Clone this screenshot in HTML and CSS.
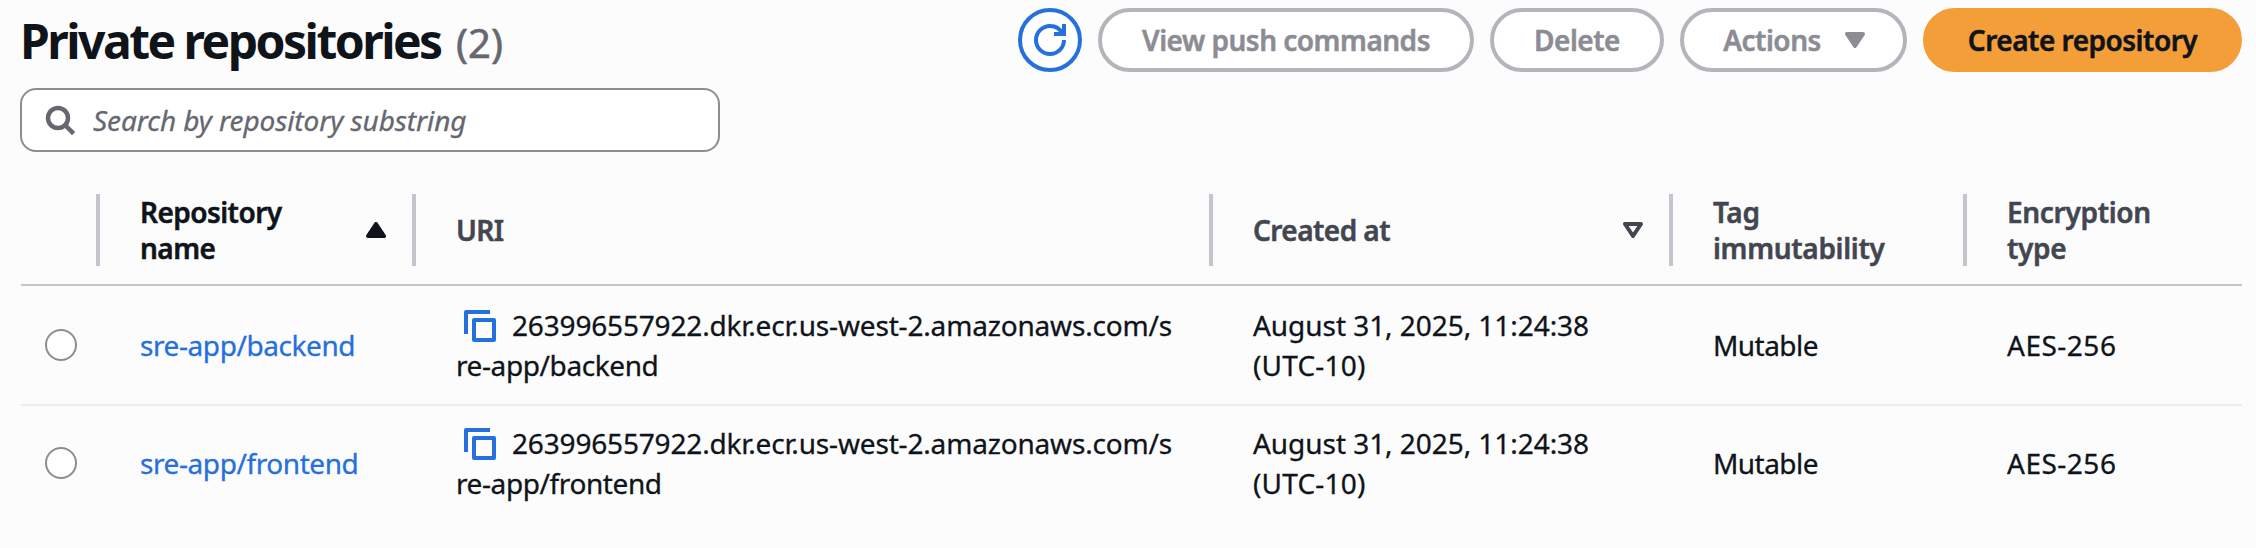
FILE: index.html
```html
<!DOCTYPE html>
<html lang="en">
<head>
<meta charset="utf-8">
<title>Private repositories</title>
<link rel="stylesheet" href="styles.css">
</head>
<body>
<header class="toolbar">
  <h1 class="title">Private repositories</h1><span class="count">(2)</span>
  <div class="actions">
    <button class="btn refresh" aria-label="Refresh">
      <svg class="icon" viewBox="0 0 16 16"><path d="M15 8c0 3.87-3.13 7-7 7s-7-3.13-7-7 3.13-7 7-7c2.79 0 5.2 1.64 6.3 4M10 5h5V0"/></svg>
    </button>
    <button class="btn push">View push commands</button>
    <button class="btn delete">Delete</button>
    <button class="btn menu">Actions
      <svg class="caret" viewBox="0 0 20 16"><path d="M2 2h16l-8 12z" fill="currentColor"/></svg>
    </button>
    <button class="btn primary">Create repository</button>
  </div>
</header>
<label class="search">
  <svg class="search-icon" viewBox="0 0 32 32"><circle cx="14" cy="14" r="10"/><path d="M21 21l8.6 8.6"/></svg>
  <input class="search-input" type="text" placeholder="Search by repository substring">
</label>
<main class="table">
  <div class="row head">
    <div class="cell select"></div>
    <div class="cell name sorted"><span class="label">Repository<br>name</span>
      <svg class="caret" viewBox="0 0 20 16"><path d="M10 2l8 12H2z" fill="currentColor"/></svg></div>
    <div class="cell uri">URI</div>
    <div class="cell created"><span class="label">Created at</span>
      <svg class="caret" viewBox="0 0 20 16"><path d="M2 2h16l-8 12z" fill="none"/></svg></div>
    <div class="cell tag"><span class="label wide">Tag<br>immutability</span></div>
    <div class="cell encryption"><span class="label wide">Encryption<br>type</span></div>
  </div>
  <div class="row">
    <div class="cell select"><span class="radio"></span></div>
    <div class="cell name"><a class="link">sre-app/backend</a></div>
    <div class="cell uri"><div><svg class="copy" viewBox="0 0 16 16"><path d="M13 1H1v11" class="back"/><rect x="5" y="5" width="10" height="10"/></svg>263996557922.dkr.ecr.us-west-2.amazonaws.com/s<br><span class="path">re-app/backend</span></div></div>
    <div class="cell created"><div>August 31, 2025, 11:24:38<br><span class="zone">(UTC-10)</span></div></div>
    <div class="cell tag">Mutable</div>
    <div class="cell encryption">AES-256</div>
  </div>
  <div class="row">
    <div class="cell select"><span class="radio"></span></div>
    <div class="cell name"><a class="link">sre-app/frontend</a></div>
    <div class="cell uri"><div><svg class="copy" viewBox="0 0 16 16"><path d="M13 1H1v11" class="back"/><rect x="5" y="5" width="10" height="10"/></svg>263996557922.dkr.ecr.us-west-2.amazonaws.com/s<br><span class="path">re-app/frontend</span></div></div>
    <div class="cell created"><div>August 31, 2025, 11:24:38<br><span class="zone">(UTC-10)</span></div></div>
    <div class="cell tag">Mutable</div>
    <div class="cell encryption">AES-256</div>
  </div>
</main>
</body>
</html>
```
FILE: styles.css
```css
* { box-sizing: border-box; }
body {
  margin: 0;
  padding: 8px 14px 0 20px;
  height: 548px;
  overflow: hidden;
  background: #fcfcfd;
  color: #0f141a;
  font: 400 28px/40px "Noto Sans", "Open Sans", sans-serif;
  -webkit-text-stroke: 0.3px currentColor;
}
svg { display: block; flex: none; }

.toolbar { display: flex; align-items: center; height: 64px; }
.title {
  margin: 0;
  padding-top: 2px;
  width: 422px;
  white-space: nowrap;
  font-size: 48px;
  font-weight: 700;
  line-height: 60px;
  letter-spacing: -2.52px;
  -webkit-text-stroke: 0;
}
.count {
  margin-left: 14px;
  padding-top: 5px;
  font-size: 40px;
  line-height: 60px;
  letter-spacing: 0.1px;
  color: #656871;
  -webkit-text-stroke: 0.6px currentColor;
}
.actions { display: flex; gap: 16px; margin-left: auto; }
.btn {
  display: flex;
  align-items: center;
  justify-content: center;
  height: 64px;
  padding: 0;
  border: 4px solid #b4b4bb;
  border-radius: 32px;
  background: #fff;
  color: #8c8c94;
  font: 600 28px/40px "Noto Sans", "Open Sans", sans-serif;
  letter-spacing: -0.5px;
  white-space: nowrap;
  -webkit-text-stroke: 0.5px currentColor;
}
.refresh { width: 64px; border-color: #2570dc; color: #2570dc; }
.icon { width: 32px; height: 32px; fill: none; stroke: currentColor; stroke-width: 2; }
.push { width: 376px; }
.delete { width: 174px; }
.menu { width: 227px; gap: 24px; padding-left: 1px; }
.primary { width: 319px; border-color: #f49e3a; background: #f49e3a; color: #0f141a; }
.caret { width: 20px; height: 16px; stroke: currentColor; stroke-width: 4; stroke-linejoin: round; }

.search {
  display: flex;
  align-items: center;
  width: 700px;
  height: 64px;
  margin-top: 16px;
  padding-left: 22px;
  border: 2px solid #8c8c94;
  border-radius: 16px;
  background: #fff;
}
.search-icon { width: 32px; height: 32px; fill: none; stroke: #656871; stroke-width: 4.5; }
.search-input {
  flex: 1;
  height: 60px;
  margin-left: 17px;
  padding: 0;
  border: 0;
  outline: 0;
  background: none;
  font: italic 400 28px/40px "Noto Sans", "Open Sans", sans-serif;
  letter-spacing: -0.08px;
}
.search-input::placeholder { color: #656871; opacity: 1; -webkit-text-stroke: 0.3px #656871; }

.table { margin: 42px 0 0 1px; }
.row {
  display: grid;
  grid-template-columns: 79px 316px 797px 460px 294px 275px;
  height: 118px;
}
.row + .row + .row { border-top: 2px solid #ebebf0; padding-bottom: 2px; }
.cell { display: flex; align-items: center; padding-left: 40px; }
.created { letter-spacing: -0.05px; }
.uri { letter-spacing: -0.17px; white-space: nowrap; }
.tag { letter-spacing: -0.55px; }
.encryption { letter-spacing: 0.5px; }
.link { color: #2570dc; letter-spacing: -0.42px; }
.path { letter-spacing: -0.4px; }
.zone { letter-spacing: 0.2px; }
.head {
  height: 92px;
  padding-bottom: 18px;
  border-bottom: 2px solid #c5c5cd;
  color: #424650;
  font-weight: 600;
  line-height: 36px;
  -webkit-text-stroke: 0.5px currentColor;
}
.head .cell {
  justify-content: space-between;
  border-right: 4px solid #c5c5cd;
  padding-right: 26px;
  letter-spacing: -0.55px;
}
.head .encryption { border-right: 0; }
.head .sorted { color: #0f141a; -webkit-text-stroke-color: #0f141a; }
.head .wide { letter-spacing: -0.32px; }
.select { padding-left: 24px; }
.link { -webkit-text-stroke-color: #2570dc; }
.radio { width: 32px; height: 32px; border: 2px solid #8c8c94; border-radius: 50%; background: #fff; }
.copy {
  display: inline-block;
  width: 32px;
  height: 32px;
  margin: 0 16px 0 8px;
  vertical-align: -6px;
  fill: none;
  stroke: #2570dc;
  stroke-width: 2;
  stroke-linejoin: round;
}
```
